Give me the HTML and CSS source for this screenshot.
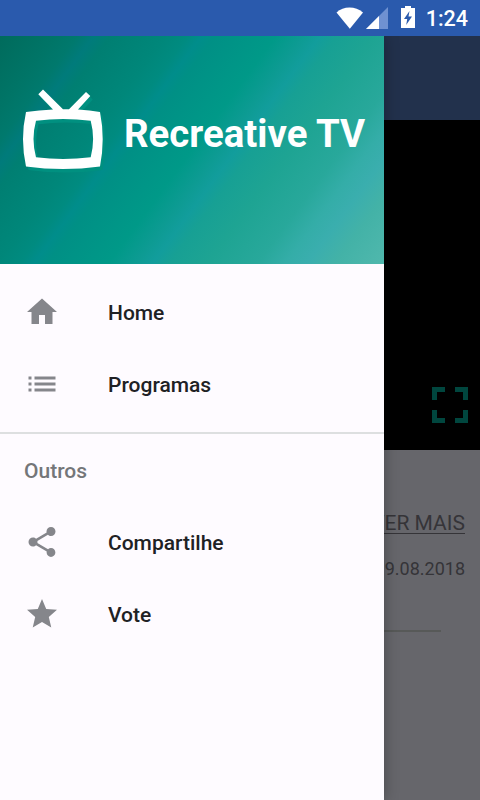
FILE: index.html
```html
<!DOCTYPE html>
<html lang="pt-BR">
<head>
    <meta charset="UTF-8">
    <meta name="viewport" content="width=device-width, initial-scale=1.0">
    <title>Recreative TV</title>
    <link rel="stylesheet" href="styles.css">
</head>
<body>
    <div class="status-bar">
        <svg class="wifi" width="28" height="22" viewBox="0 0 28 22"><path d="M.5 5.500Q6 .5 13.500 .5T27 5.500L13.800 21.800Z" fill="#fff"/></svg>
        <svg class="signal" width="22" height="22" viewBox="0 0 22 22"><path d="M0 22L22 0V22Z" fill="#6f91d1"/><path d="M0 22L13 9V22Z" fill="#fff"/></svg>
        <svg class="battery" width="14" height="22" viewBox="0 0 14 22"><path d="M0 2H4V0H10V2H14V22H0Z" fill="#fff"/><path d="M8.500 5L3 13H6.200L5.200 19L11 10.500H7.500Z" fill="#2a5aad"/></svg>
        <span class="clock">1:24</span>
    </div>

    <div class="screen">
        <main class="page">
            <div class="toolbar"></div>
            <div class="player">
                <svg width="36" height="36" viewBox="0 0 36 36" fill="none" stroke="#00463e" stroke-width="5"><path d="M2.500 13V2.500H13M23 2.500H33.500V13M33.500 23V33.500H23M13 33.500H2.500V23"/></svg>
            </div>
            <div class="details">
                <a class="more" href="#">VER MAIS</a>
                <p class="date">19.08.2018</p>
                <hr>
            </div>
        </main>

        <aside class="drawer">
            <header class="drawer-header">
                <svg class="logo" width="84" height="88" viewBox="0 0 84 88">
                    <defs>
                        <path id="tv" fill-rule="evenodd" d="M16.300 6.300L21 1.500L41 21.300H47L64 4L68.300 8L56 21.500Q68 22 78 24Q83.400 51 78 78.500Q41 83.500 4 78.500Q-2 51 4 24Q17 22 31 21.500ZM14 32.700Q9 51 14 69.300Q41 72.700 68.700 69.300Q73.500 51 68.700 32.700Q41 29.300 14 32.700Z"/>
                    </defs>
                    <use href="#tv" x="2.500" y="3.500" fill="#009080"/>
                    <use href="#tv" fill="#fff"/>
                </svg>
                <h1>Recreative TV</h1>
            </header>
            <ul class="menu">
                <li><a href="#">
                    <svg width="36" height="36" viewBox="0 0 24 24"><path d="M10 20v-6h4v6h5v-8h3L12 3 2 12h3v8z"/></svg>
                    <span>Home</span>
                </a></li>
                <li><a href="#">
                    <svg width="36" height="36" viewBox="0 0 24 24"><path d="M3 13h2v-2H3v2zm0 4h2v-2H3v2zm0-8h2V7H3v2zm4 4h14v-2H7v2zm0 4h14v-2H7v2zM7 7v2h14V7H7z"/></svg>
                    <span>Programas</span>
                </a></li>
            </ul>
            <div class="group">
                <h2>Outros</h2>
                <ul class="menu">
                    <li><a href="#">
                        <svg width="36" height="36" viewBox="0 0 24 24"><path d="M18 16.080c-.76 0-1.440.3-1.960.77L8.910 12.700c.05-.23.09-.46.09-.7s-.04-.47-.09-.7l7.050-4.110c.54.5 1.250.81 2.040.81 1.660 0 3-1.340 3-3s-1.340-3-3-3-3 1.340-3 3c0 .24.04.47.09.7L8.040 9.810C7.500 9.310 6.790 9 6 9c-1.660 0-3 1.340-3 3s1.340 3 3 3c.79 0 1.500-.31 2.040-.81l7.120 4.160c-.05.21-.08.43-.08.65 0 1.610 1.310 2.920 2.920 2.920s2.920-1.310 2.920-2.920-1.310-2.920-2.920-2.920z"/></svg>
                        <span>Compartilhe</span>
                    </a></li>
                    <li><a href="#">
                        <svg width="36" height="36" viewBox="0 0 24 24"><path d="M12 17.270L18.180 21l-1.640-7.030L22 9.240l-7.190-.61L12 2 9.190 8.630 2 9.240l5.460 4.730L5.820 21z"/></svg>
                        <span>Vote</span>
                    </a></li>
                </ul>
            </div>
        </aside>
    </div>
</body>
</html>
```
FILE: styles.css
```css
* {
    margin: 0;
    padding: 0;
    box-sizing: border-box;
}

body {
    height: 100vh;
    display: flex;
    flex-direction: column;
    font-family: Roboto, sans-serif;
    overflow: hidden;
}

svg { display: block; flex-shrink: 0; }

.status-bar {
    height: 36px;
    flex-shrink: 0;
    display: flex;
    align-items: center;
    justify-content: flex-end;
    padding-right: 12px;
    background-color: #2a5aad;
    color: #fff;
}
.signal { margin-left: 2px; }
.battery { margin: 0 11px 2px 13px; }
.clock { padding-top: 2px; font-size: 21.5px; font-weight: 500; line-height: 34px; }

.screen {
    position: relative;
    flex: 1;
    overflow: hidden;
}

/* page behind the open drawer, already dimmed */
.page {
    height: 100%;
    display: flex;
    flex-direction: column;
    background-color: #66666b;
}
.toolbar { height: 84px; background-color: #22314c; }
.player {
    height: 330px;
    display: flex;
    align-items: flex-end;
    justify-content: flex-end;
    padding: 0 12px 27px 0;
    background-color: #000;
}
.details {
    display: flex;
    flex-direction: column;
    align-items: flex-end;
    padding: 60px 15px 0 40px;
    color: #353438;
}
.more { color: inherit; font-size: 21px; line-height: 26px; text-underline-offset: 3px; text-decoration-thickness: 1px; }
.date { margin-top: 22px; font-size: 18px; line-height: 22px; }
.details hr { width: 400px; height: 2px; margin: 50px 24px 0 0; border: 0; background-color: #575958; }

.drawer {
    position: absolute;
    top: 0;
    left: 0;
    width: 384px;
    height: 100%;
    background-color: #fefbff;
    box-shadow: 0 0 14px rgba(0, 0, 0, 0.3);
}
.drawer-header {
    height: 228px;
    display: flex;
    align-items: flex-start;
    padding: 52px 0 0 22px;
    background: linear-gradient(126.4deg, #006b5c 0%, #007567 10%, #00796d 14%, #007b7b 17%, #007f72 20%, #00877a 30%, #008b80 34%, #008d8b 36.500%, #009085 39%, #009988 50%, #0d9b93 55%, #129d9c 58%, #17a094 61%, #1ea493 68%, #28a89b 77%, #34ada8 82%, #3aaeae 86%, #43b2a7 91%, #50b8ad 100%);
    color: #fff;
}
.drawer-header h1 { margin: 23px 0 0 18px; font-size: 38.4px; line-height: 46px; font-weight: 700; white-space: nowrap; }

.menu { list-style: none; }
.menu a {
    height: 72px;
    display: flex;
    align-items: center;
    gap: 48px;
    padding-left: 24px;
    color: #202124;
    font-size: 21px;
    font-weight: 500;
    text-decoration: none;
}
.menu span { padding-top: 2px; }
.menu svg { fill: #85868b; }
.drawer > .menu { padding: 12px 0; }
.group { border-top: 2px solid #dddfe0; }
.group h2 { height: 72px; padding: 2px 0 0 24px; color: #747679; font-size: 21px; font-weight: 500; line-height: 70px; }
```
